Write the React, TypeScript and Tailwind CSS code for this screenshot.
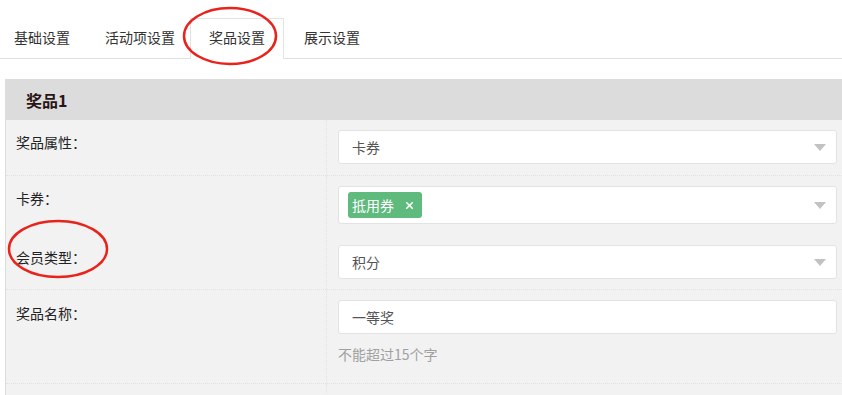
import { X } from "lucide-react";

const TABS = [
  { t: "基础设置", cls: "ml-[14px]" },
  { t: "活动项设置", cls: "ml-[35px]" },
  { t: "奖品设置", cls: "ml-[15px] border border-b-0 border-[#e3e3e3] bg-white px-[18px]" },
  { t: "展示设置", cls: "ml-[20px]" },
];

function Caret() {
  return (
    <svg width="12" height="7" viewBox="0 0 12 7" className="shrink-0">
      <path d="M0 0h12L6 7z" fill="#c2c2c2" />
    </svg>
  );
}

function Select({ children, caret = true }: { children: React.ReactNode; caret?: boolean }) {
  return (
    <div className="flex h-[34px] items-center justify-between rounded-[3px] border border-[#e3e3e3] bg-white pl-[13px] pr-[10px] text-[14px] text-[#555]">
      <div className="flex items-center">{children}</div>
      {caret && <Caret />}
    </div>
  );
}

function Row({
  label,
  h,
  pt,
  rt,
  divider = true,
  children,
}: {
  label: string;
  h: number;
  pt: number;
  rt: number;
  divider?: boolean;
  children?: React.ReactNode;
}) {
  return (
    <div
      className={`flex ${divider ? "border-b border-dotted border-[#e2e2e2]" : ""}`}
      style={{ height: h }}
    >
      <div
        className="w-[321px] border-r border-dotted border-[#e2e2e2] pl-[10px] text-[14px] text-[#222]"
        style={{ paddingTop: pt }}
      >
        {label}
      </div>
      <div className="flex-1 pl-[11px] pr-[5px]" style={{ paddingTop: rt }}>
        {children}
      </div>
    </div>
  );
}

export default function App() {
  return (
    <div
      className="relative h-[395px] w-[842px] overflow-hidden bg-white"
      style={{ fontFamily: '"Noto Sans CJK SC", "Liberation Sans", sans-serif' }}
    >
      {/* tabs */}
      <div className="flex h-[59px] items-end border-b border-[#e0e0e0]">
        {TABS.map(({ t, cls }) => (
          <div
            key={t}
            className={`relative -mb-px flex h-[41px] items-center pb-[3px] text-[14px] text-[#333] ${cls}`}
          >
            {t}
          </div>
        ))}
      </div>

      {/* prize panel */}
      <div className="ml-[5px] mt-[20px] border-l border-[#dcdcdc] bg-[#f2f2f2]">
        <div className="flex h-[41px] items-center bg-[#dcdcdc] pl-[20px] text-[16px] font-bold text-[#2a1515]">
          奖品1
        </div>
        <Row label="奖品属性：" h={56} pt={12} rt={10}>
          <Select>卡券</Select>
        </Row>
        <Row label="卡券：" h={58} pt={12} rt={10} divider={false}>
          <div className="flex h-[38px] items-center justify-between rounded-[3px] border border-[#e3e3e3] bg-white pl-[9px] pr-[10px]">
            <span className="flex h-[26px] items-center gap-[10px] rounded-[3px] bg-[#5fba7d] pl-[4px] pr-[7px] text-[14px] text-white">
              抵用券
              <X size={11} strokeWidth={3.5} />
            </span>
            <Caret />
          </div>
        </Row>
        <Row label="会员类型：" h={56} pt={13} rt={11}>
          <Select>积分</Select>
        </Row>
        <Row label="奖品名称：" h={94} pt={13} rt={10}>
          <Select caret={false}>一等奖</Select>
          <div className="mt-[10px] text-[14px] text-[#a0a0a0]">不能超过15个字</div>
        </Row>
        <Row label="" h={40} pt={12} rt={10} divider={false} />
      </div>

      {/* red annotation circles */}
      <svg className="pointer-events-none absolute left-0 top-0" width="842" height="395">
        <ellipse cx="230" cy="36" rx="46" ry="28" fill="none" stroke="#e8231b" strokeWidth="2.5" />
        <ellipse cx="58" cy="249" rx="49" ry="28" fill="none" stroke="#e8231b" strokeWidth="2.5" />
      </svg>
    </div>
  );
}
